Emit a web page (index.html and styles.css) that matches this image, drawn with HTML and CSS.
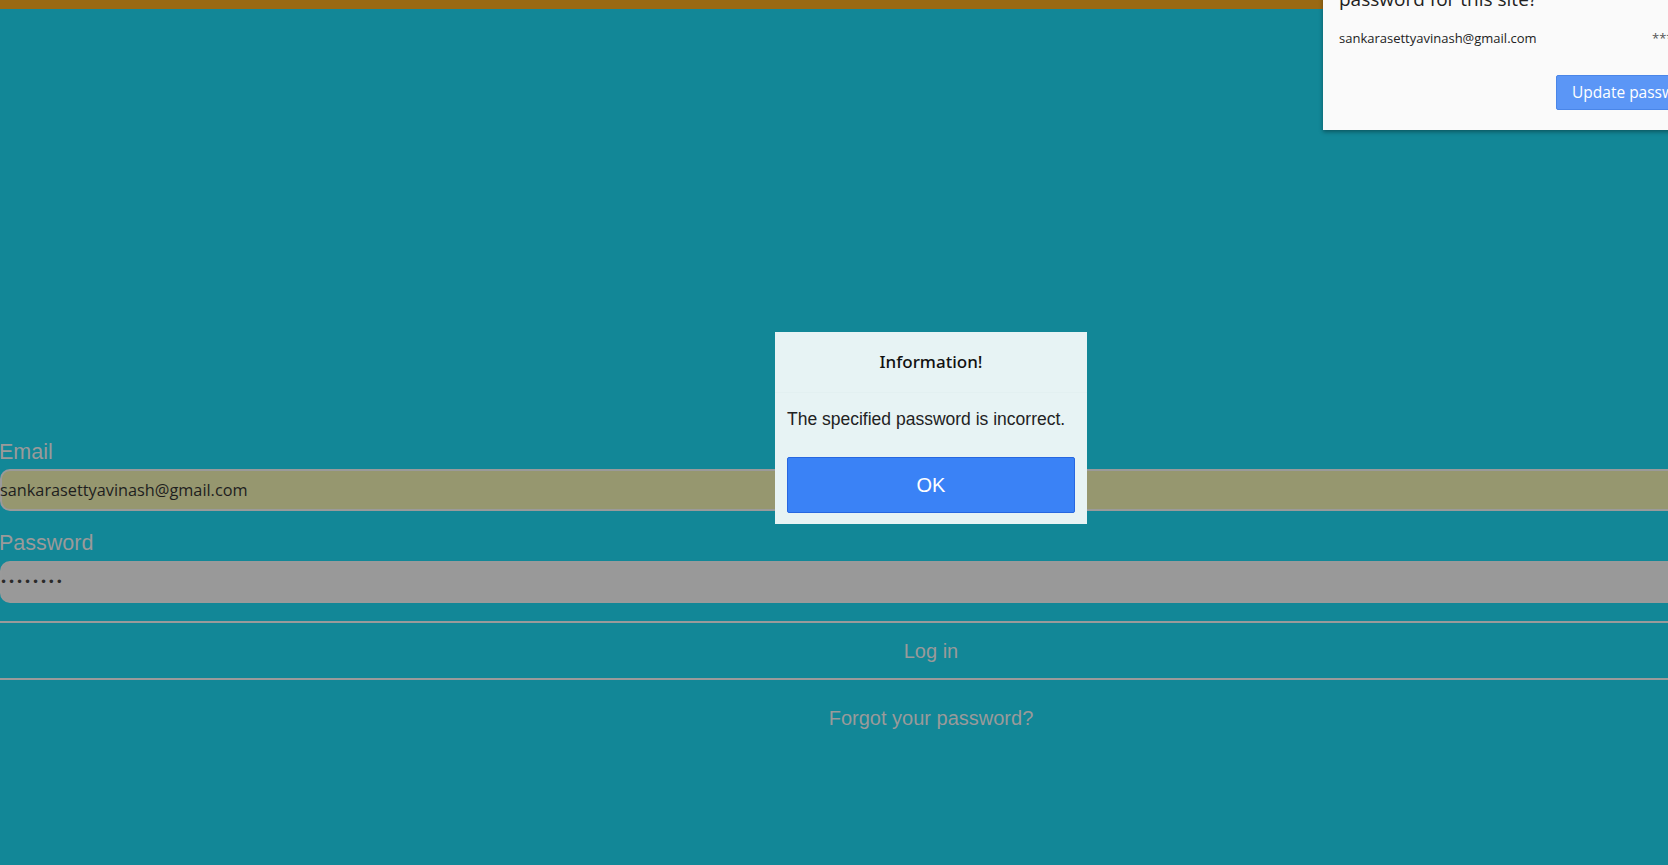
FILE: index.html
```html
<!DOCTYPE html>
<html>
<head>
<meta charset="utf-8">
<link rel="stylesheet" href="styles.css">
</head>
<body>
<div class="topbar"></div>
<main class="page">
  <form class="login">
    <label class="field-label">Email</label>
    <div class="input input-email">sankarasettyavinash@gmail.com</div>
    <label class="field-label field-label-pw">Password</label>
    <div class="input input-pw">••••••••</div>
    <div class="login-btn">Log in</div>
    <div class="forgot">Forgot your password?</div>
  </form>
</main>

<div class="dialog">
  <div class="dialog-title">Information!</div>
  <div class="dialog-body">The specified password is incorrect.</div>
  <div class="dialog-ok">OK</div>
</div>

<div class="savepw">
  <div class="savepw-title">password for this site?</div>
  <div class="savepw-row">
    <span class="savepw-user">sankarasettyavinash@gmail.com</span>
    <span class="savepw-stars">***</span>
  </div>
  <div class="savepw-actions">
    <div class="savepw-btn">Update password</div>
  </div>
</div>
</body>
</html>
```

FILE: styles.css
```css
html, body {
  margin: 0;
  padding: 0;
  width: 1668px;
  height: 865px;
  overflow: hidden;
  background: #128797;
}
body {
  position: relative;
  font-family: "Liberation Sans", Arial, sans-serif;
}
.topbar {
  height: 9px;
  background: #9a6913;
}
.page {
  width: 1862px;
  padding-top: 430px;
}
.login {
  display: flex;
  flex-direction: column;
}
.field-label {
  font-size: 21.5px;
  line-height: 26px;
  color: #9a9a9a;
  margin-left: -1px;
  margin-bottom: 4px;
}
.field-label-pw {
  margin-top: 19px;
  margin-bottom: 5px;
}
.input {
  height: 42px;
  box-sizing: border-box;
  border: 2px solid #9a9a9a;
  border-radius: 10px;
  font-family: "Open Sans", "Noto Sans", sans-serif;
  font-size: 16.3px;
  line-height: 38px;
  color: #1e1e1e;
  text-indent: -2px;
}
.input-email {
  background: #96976f;
}
.input-pw {
  background: #999999;
  font-family: "DejaVu Sans", sans-serif;
  font-size: 12px;
  letter-spacing: 0.9px;
  color: #2a2a2a;
}
.login-btn {
  margin-top: 18px;
  height: 59px;
  box-sizing: border-box;
  border-top: 2px solid #9a9a9a;
  border-bottom: 2px solid #9a9a9a;
  text-align: center;
  font-size: 20px;
  line-height: 56px;
  color: #9a9a9a;
}
.forgot {
  margin-top: 26px;
  text-align: center;
  font-size: 20px;
  line-height: 24px;
  color: #9a9a9a;
}

.dialog {
  position: absolute;
  left: 775px;
  top: 332px;
  width: 312px;
  height: 192px;
  box-sizing: border-box;
  background: #e7f3f4;
  display: flex;
  flex-direction: column;
  align-items: stretch;
  padding: 0 12px;
}
.dialog-title {
  text-align: center;
  font-family: "Noto Sans", "Open Sans", sans-serif;
  font-weight: 500;
  font-size: 17px;
  line-height: 24px;
  color: #111;
  padding-top: 18px;
  padding-bottom: 18px;
  border-bottom: 1px solid #e3f0f1;
  margin: 0 -12px;
}
.dialog-body {
  font-family: "Liberation Sans", Arial, sans-serif;
  font-size: 17.5px;
  line-height: 24px;
  color: #222;
  margin-top: 14px;
}
.dialog-ok {
  margin-top: 26px;
  height: 56px;
  box-sizing: border-box;
  background: #3a82f6;
  border: 1px solid #2767e0;
  border-radius: 2px;
  color: #fff;
  text-align: center;
  font-size: 20px;
  line-height: 54px;
}

.savepw {
  position: absolute;
  left: 1323px;
  top: -40px;
  width: 420px;
  height: 170px;
  background: #fafafa;
  box-shadow: 0 2px 4px rgba(0,0,0,0.35);
  box-sizing: border-box;
  padding: 0 16px;
  font-family: "Open Sans", "Noto Sans", sans-serif;
}
.savepw-title {
  font-size: 19px;
  line-height: 26px;
  color: #222;
  padding-top: 26px;
  height: 26px;
}
.savepw-row {
  display: flex;
  margin-top: 17px;
  font-size: 13px;
  line-height: 18px;
  color: #222;
}
.savepw-user {
  width: 313px;
}
.savepw-stars {
  color: #555;
}
.savepw-actions {
  margin-top: 28px;
  padding-left: 217px;
}
.savepw-btn {
  height: 35px;
  box-sizing: border-box;
  background: #5b96f6;
  border: 1px solid #4a86e8;
  border-radius: 2px;
  color: #fff;
  font-size: 15.5px;
  line-height: 33px;
  padding: 0 15px;
  white-space: nowrap;
}
```
